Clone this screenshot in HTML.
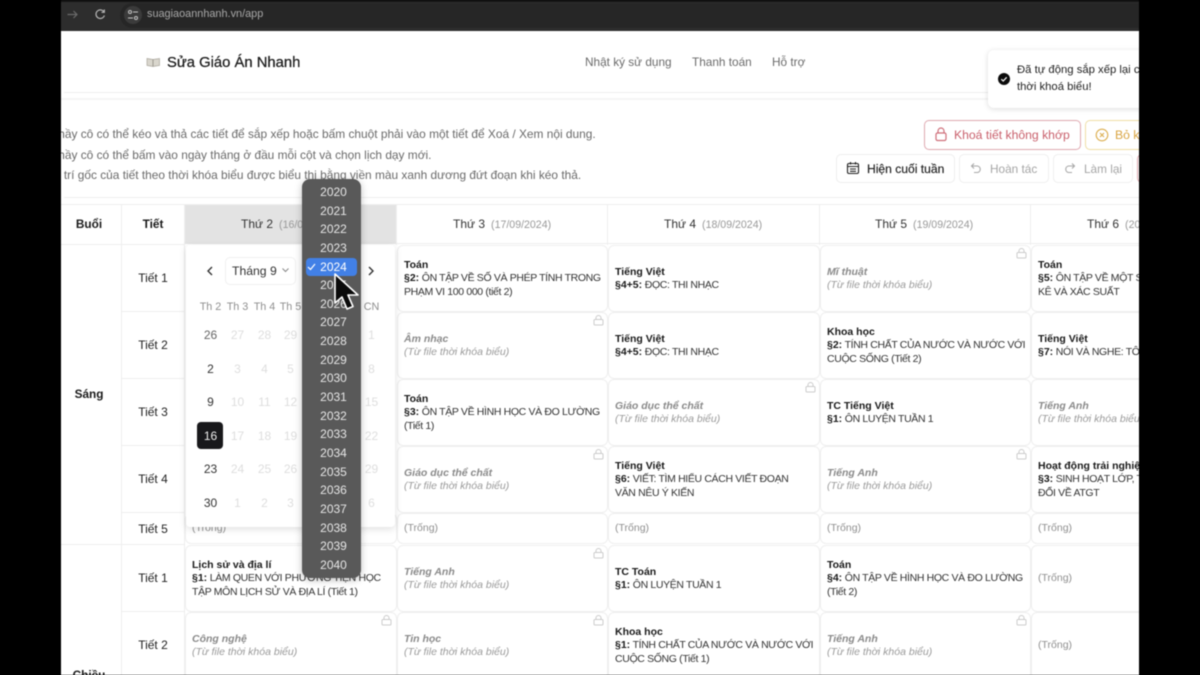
<!DOCTYPE html>
<html lang="vi"><head><meta charset="utf-8"><title>Sửa Giáo Án Nhanh</title>
<style>
html,body{margin:0;padding:0;background:#000;width:1200px;height:675px;overflow:hidden}
#r{position:absolute;left:0;top:0;width:1200px;height:675px;background:#fff;overflow:hidden;font-family:"Liberation Sans",sans-serif;color:#1a1a1a;filter:blur(.4px)}
#r div,#r span.a,#r svg{position:absolute}
.t{white-space:nowrap}
.c{border:1px solid #efefef;border-radius:6px;background:#fff;box-sizing:border-box;display:flex;align-items:center;padding-left:6px;padding-top:1px;font-size:10.5px;line-height:13.4px;white-space:nowrap;color:#333}
.c span{letter-spacing:-.35px}
.c b{color:#1a1a1a;font-weight:700;letter-spacing:0}
.c i{color:#9a9a9a}
.c i b{color:#8a8a8a}
.c span.g{color:#8f8f8f;letter-spacing:0}
.h{font-size:12px;color:#333;white-space:nowrap}
.h small{font-size:10.6px;color:#999;margin-left:6px}
.l{font-size:12px;color:#222;width:62px;left:122px;text-align:center}
.ln{background:#eee}
.lock{width:11px;height:11px;fill:none;stroke:#cbcbcb;stroke-width:1}
.y{left:304px;width:59px;text-align:center;color:#e6e6e6;font-size:12px;line-height:18px;height:18px}
.d{width:27px;text-align:center;font-size:12px;line-height:14px;color:#dedede}
.d.on{color:#333}
.wd{width:27px;text-align:center;font-size:10.8px;line-height:12px;color:#8f8f8f}
.btn{box-sizing:border-box;border:1px solid #efefef;border-radius:5px;height:29px;font-size:11.8px;line-height:28px;white-space:nowrap;background:#fff}
.ins{font-size:11.9px;line-height:14px;color:#6a6a6a}
.nav{top:55px;font-size:11.8px;line-height:14px;color:#6b6b6b}
</style></head><body>
<div id="r">
<!-- browser bar -->
<div style="left:0;top:0;width:1200px;height:31px;background:#2d2d2d"></div>
<div style="left:0;top:0;width:1200px;height:2px;background:#141414"></div>
<div style="left:120px;top:3px;width:1030px;height:25px;border-radius:13px;background:#262626"></div>
<svg style="left:66px;top:8px" width="13" height="13" viewBox="0 0 13 13" fill="none" stroke="#6a6a6a" stroke-width="1.2"><path d="M1.500 6.500H11M7.500 3L11 6.500L7.500 10"/></svg>
<svg style="left:94px;top:8px" width="12" height="12" viewBox="0 0 12 12" fill="none" stroke="#b5b5b5" stroke-width="1.200"><path d="M10 4A4.300 4.300 0 1 0 10.400 7.500M10.300 1.500V4.300H7.500"/></svg>
<div style="left:124px;top:6px;width:18px;height:18px;border-radius:9px;background:#3b3b3b"></div>
<svg style="left:127px;top:9px" width="12" height="12" viewBox="0 0 12 12" fill="none" stroke="#c4c4c4" stroke-width="1"><circle cx="3" cy="3" r="1.500"/><path d="M6 3H11M1 9H6"/><circle cx="9" cy="9" r="1.500"/></svg>
<div class="t" style="left:147px;top:8px;font-size:10.9px;line-height:13px;color:#a9a9a9">suagiaoannhanh.vn/app</div>

<!-- header -->
<svg style="left:146px;top:56px" width="15" height="12" viewBox="0 0 15 12"><path d="M1 2.500L7 3.500L13.500 2.500V9.500L7 10.500L1 9.500Z" fill="#d9d6cd" stroke="#a9a59b" stroke-width=".7"/><path d="M7 3.500V10.500" stroke="#8d8a80" stroke-width=".8"/></svg>
<div class="t" style="left:167px;top:54px;font-size:14.8px;line-height:18px;color:#1c1c1c;-webkit-text-stroke:.25px #1c1c1c">Sửa Giáo Án Nhanh</div>
<div class="t nav" style="left:585px">Nhật ký sử dụng</div>
<div class="t nav" style="left:692px">Thanh toán</div>
<div class="t nav" style="left:772px">Hỗ trợ</div>
<div class="ln" style="left:64px;top:92px;width:1080px;height:1px"></div>
<div style="left:61px;top:98px;width:1080px;height:2px;background:#f5f5f5"></div>

<!-- instructions -->
<div class="t ins" style="left:51px;top:127px">Thầy cô có thể kéo và thả các tiết để sắp xếp hoặc bấm chuột phải vào một tiết để Xoá / Xem nội dung.</div>
<div class="t ins" style="left:51px;top:148px">Thầy cô có thể bấm vào ngày tháng ở đầu mỗi cột và chọn lịch dạy mới.</div>
<div class="t ins" style="left:50px;top:168px">Vị trí gốc của tiết theo thời khóa biểu được biểu thị bằng viền màu xanh dương đứt đoạn khi kéo thả.</div>

<!-- buttons -->
<div class="btn" style="left:924px;top:120px;width:157px;height:30px;border-color:#dfa9b0;color:#c9606c;padding-left:29px;font-size:12.2px">Khoá tiết không khớp</div>
<svg style="left:934px;top:127px" width="14" height="15" viewBox="0 0 14 15" fill="none" stroke="#cf6f7a" stroke-width="1.200"><rect x="2" y="6" width="10" height="7.500" rx="1.500"/><path d="M4 6V4A3 3 0 0 1 10 4V6"/></svg>
<div class="btn" style="left:1085px;top:120px;width:120px;height:30px;border-color:#efdfa6;color:#d9a441;padding-left:29px;font-size:12.2px">Bỏ khoá tất cả</div>
<svg style="left:1095px;top:128px" width="14" height="14" viewBox="0 0 14 14" fill="none" stroke="#dcae4f" stroke-width="1.100"><circle cx="7" cy="7" r="5.800"/><path d="M5 5L9 9M9 5L5 9"/></svg>
<div class="btn" style="left:836px;top:154px;width:119px;color:#1f1f1f;padding-left:30px;border-color:#eee;font-size:12.1px;-webkit-text-stroke:.15px #1f1f1f">Hiện cuối tuần</div>
<svg style="left:846px;top:161px" width="14" height="14" viewBox="0 0 14 14" fill="none" stroke="#222" stroke-width="1.100"><rect x="1.500" y="2.500" width="11" height="10" rx="1.500"/><path d="M1.500 5.500H12.500M4.500 1V3.500M9.500 1V3.500M4 8H10M4 10.300H10"/></svg>
<div class="btn" style="left:959px;top:154px;width:90px;color:#a5a5a5;padding-left:30px">Hoàn tác</div>
<svg style="left:970px;top:162px" width="12" height="12" viewBox="0 0 12 12" fill="none" stroke="#a8a8a8" stroke-width="1.100"><path d="M4 1.500L1.500 4L4 6.500M1.500 4H7.500A3.300 3.300 0 0 1 7.500 10.500H4"/></svg>
<div class="btn" style="left:1053px;top:154px;width:80px;color:#a5a5a5;padding-left:30px">Làm lại</div>
<svg style="left:1064px;top:162px" width="12" height="12" viewBox="0 0 12 12" fill="none" stroke="#a8a8a8" stroke-width="1.100"><path d="M8 1.500L10.500 4L8 6.500M10.500 4H4.500A3.300 3.300 0 0 0 4.500 10.500H8"/></svg>
<div class="btn" style="left:1137px;top:154px;width:40px;border-color:#dfa9b0"></div>

<!-- table frame -->
<div class="ln" style="left:64px;top:197px;width:1080px;height:1px"></div>
<div class="ln" style="left:61px;top:204px;width:1080px;height:1px"></div>
<div class="ln" style="left:61px;top:244px;width:124px;height:1px"></div>
<div class="ln" style="left:121px;top:204px;width:1px;height:471px"></div>
<div class="ln" style="left:184px;top:204px;width:1px;height:471px"></div>
<div class="ln" style="left:122px;top:311px;width:63px;height:1px"></div>
<div class="ln" style="left:122px;top:378px;width:63px;height:1px"></div>
<div class="ln" style="left:122px;top:445px;width:63px;height:1px"></div>
<div class="ln" style="left:122px;top:512px;width:63px;height:1px"></div>
<div class="ln" style="left:61px;top:544px;width:124px;height:1px"></div>
<div class="ln" style="left:122px;top:611px;width:63px;height:1px"></div>
<div class="ln" style="left:396px;top:204px;width:1px;height:41px"></div>
<div class="ln" style="left:607px;top:204px;width:1px;height:41px"></div>
<div class="ln" style="left:819px;top:204px;width:1px;height:41px"></div>
<div class="ln" style="left:1030px;top:204px;width:1px;height:41px"></div>
<div class="ln" style="left:397px;top:243px;width:750px;height:1px"></div>
<div style="left:185px;top:205px;width:211px;height:39px;background:#e3e3e3"></div>

<div class="t" style="left:59px;width:60px;top:217px;text-align:center;font-size:11.8px;line-height:14px;font-weight:700">Buổi</div>
<div class="t" style="left:122px;width:62px;top:217px;text-align:center;font-size:11.8px;line-height:14px;font-weight:700">Tiết</div>
<div class="h" style="left:241px;top:217px;line-height:14px">Thứ 2<small>(16/09/2024)</small></div>
<div class="h" style="left:453px;top:217px;line-height:14px">Thứ 3<small>(17/09/2024)</small></div>
<div class="h" style="left:664px;top:217px;line-height:14px">Thứ 4<small>(18/09/2024)</small></div>
<div class="h" style="left:875px;top:217px;line-height:14px">Thứ 5<small>(19/09/2024)</small></div>
<div class="h" style="left:1087px;top:217px;line-height:14px">Thứ 6<small>(20/09/2024)</small></div>

<div class="t" style="left:59px;width:60px;top:387px;text-align:center;font-size:11.8px;line-height:14px;font-weight:700">Sáng</div>
<div class="t" style="left:59px;width:60px;top:668px;text-align:center;font-size:11.8px;line-height:14px;font-weight:700">Chiều</div>

<div class="l t" style="top:271px;line-height:14px">Tiết 1</div>
<div class="l t" style="top:338px;line-height:14px">Tiết 2</div>
<div class="l t" style="top:405px;line-height:14px">Tiết 3</div>
<div class="l t" style="top:472px;line-height:14px">Tiết 4</div>
<div class="l t" style="top:522px;line-height:14px">Tiết 5</div>
<div class="l t" style="top:571px;line-height:14px">Tiết 1</div>
<div class="l t" style="top:638px;line-height:14px">Tiết 2</div>

<!-- Thu 2 -->
<div class="c" style="left:185px;top:513px;width:212px;height:31px"><span class="g">(Trống)</span></div>
<div class="c" style="left:185px;top:545px;width:212px;height:67px"><span><b>Lịch sử và địa lí</b><br><b>§1:</b> LÀM QUEN VỚI PHƯƠNG TIỆN HỌC<br>TẬP MÔN LỊCH SỬ VÀ ĐỊA LÍ (Tiết 1)</span></div>
<div class="c" style="left:185px;top:612px;width:212px;height:67px"><i><b>Công nghệ</b><br>(Từ file thời khóa biểu)</i></div>
<svg class="lock" style="left:381px;top:615px" viewBox="0 0 11 11"><rect x="1" y="4.500" width="9" height="5.500" rx="1"/><path d="M3 4.500V3A2.500 2.500 0 0 1 8 3V4.500"/></svg>

<!-- Thu 3 -->
<div class="c" style="left:397px;top:245px;width:211px;height:67px"><span><b>Toán</b><br><b>§2:</b> ÔN TẬP VỀ SỐ VÀ PHÉP TÍNH TRONG<br>PHẠM VI 100 000 (tiết 2)</span></div>
<div class="c" style="left:397px;top:312px;width:211px;height:67px"><i><b>Âm nhạc</b><br>(Từ file thời khóa biểu)</i></div>
<svg class="lock" style="left:593px;top:315px" viewBox="0 0 11 11"><rect x="1" y="4.500" width="9" height="5.500" rx="1"/><path d="M3 4.500V3A2.500 2.500 0 0 1 8 3V4.500"/></svg>
<div class="c" style="left:397px;top:379px;width:211px;height:67px"><span><b>Toán</b><br><b>§3:</b> ÔN TẬP VỀ HÌNH HỌC VÀ ĐO LƯỜNG<br>(Tiết 1)</span></div>
<div class="c" style="left:397px;top:446px;width:211px;height:67px"><i><b>Giáo dục thể chất</b><br>(Từ file thời khóa biểu)</i></div>
<svg class="lock" style="left:593px;top:449px" viewBox="0 0 11 11"><rect x="1" y="4.500" width="9" height="5.500" rx="1"/><path d="M3 4.500V3A2.500 2.500 0 0 1 8 3V4.500"/></svg>
<div class="c" style="left:397px;top:513px;width:211px;height:31px"><span class="g">(Trống)</span></div>
<div class="c" style="left:397px;top:545px;width:211px;height:67px"><i><b>Tiếng Anh</b><br>(Từ file thời khóa biểu)</i></div>
<svg class="lock" style="left:593px;top:548px" viewBox="0 0 11 11"><rect x="1" y="4.500" width="9" height="5.500" rx="1"/><path d="M3 4.500V3A2.500 2.500 0 0 1 8 3V4.500"/></svg>
<div class="c" style="left:397px;top:612px;width:211px;height:67px"><i><b>Tin học</b><br>(Từ file thời khóa biểu)</i></div>
<svg class="lock" style="left:593px;top:615px" viewBox="0 0 11 11"><rect x="1" y="4.500" width="9" height="5.500" rx="1"/><path d="M3 4.500V3A2.500 2.500 0 0 1 8 3V4.500"/></svg>

<!-- Thu 4 -->
<div class="c" style="left:608px;top:245px;width:212px;height:67px"><span><b>Tiếng Việt</b><br><b>§4+5:</b> ĐỌC: THI NHẠC</span></div>
<div class="c" style="left:608px;top:312px;width:212px;height:67px"><span><b>Tiếng Việt</b><br><b>§4+5:</b> ĐỌC: THI NHẠC</span></div>
<div class="c" style="left:608px;top:379px;width:212px;height:67px"><i><b>Giáo dục thể chất</b><br>(Từ file thời khóa biểu)</i></div>
<svg class="lock" style="left:805px;top:382px" viewBox="0 0 11 11"><rect x="1" y="4.500" width="9" height="5.500" rx="1"/><path d="M3 4.500V3A2.500 2.500 0 0 1 8 3V4.500"/></svg>
<div class="c" style="left:608px;top:446px;width:212px;height:67px"><span><b>Tiếng Việt</b><br><b>§6:</b> VIẾT: TÌM HIỂU CÁCH VIẾT ĐOẠN<br>VĂN NÊU Ý KIẾN</span></div>
<div class="c" style="left:608px;top:513px;width:212px;height:31px"><span class="g">(Trống)</span></div>
<div class="c" style="left:608px;top:545px;width:212px;height:67px"><span><b>TC Toán</b><br><b>§1:</b> ÔN LUYỆN TUẦN 1</span></div>
<div class="c" style="left:608px;top:612px;width:212px;height:67px"><span><b>Khoa học</b><br><b>§1:</b> TÍNH CHẤT CỦA NƯỚC VÀ NƯỚC VỚI<br>CUỘC SỐNG (Tiết 1)</span></div>

<!-- Thu 5 -->
<div class="c" style="left:820px;top:245px;width:211px;height:67px"><i><b>Mĩ thuật</b><br>(Từ file thời khóa biểu)</i></div>
<svg class="lock" style="left:1016px;top:248px" viewBox="0 0 11 11"><rect x="1" y="4.500" width="9" height="5.500" rx="1"/><path d="M3 4.500V3A2.500 2.500 0 0 1 8 3V4.500"/></svg>
<div class="c" style="left:820px;top:312px;width:211px;height:67px"><span><b>Khoa học</b><br><b>§2:</b> TÍNH CHẤT CỦA NƯỚC VÀ NƯỚC VỚI<br>CUỘC SỐNG (Tiết 2)</span></div>
<div class="c" style="left:820px;top:379px;width:211px;height:67px"><span><b>TC Tiếng Việt</b><br><b>§1:</b> ÔN LUYỆN TUẦN 1</span></div>
<div class="c" style="left:820px;top:446px;width:211px;height:67px"><i><b>Tiếng Anh</b><br>(Từ file thời khóa biểu)</i></div>
<svg class="lock" style="left:1016px;top:449px" viewBox="0 0 11 11"><rect x="1" y="4.500" width="9" height="5.500" rx="1"/><path d="M3 4.500V3A2.500 2.500 0 0 1 8 3V4.500"/></svg>
<div class="c" style="left:820px;top:513px;width:211px;height:31px"><span class="g">(Trống)</span></div>
<div class="c" style="left:820px;top:545px;width:211px;height:67px"><span><b>Toán</b><br><b>§4:</b> ÔN TẬP VỀ HÌNH HỌC VÀ ĐO LƯỜNG<br>(Tiết 2)</span></div>
<div class="c" style="left:820px;top:612px;width:211px;height:67px"><i><b>Tiếng Anh</b><br>(Từ file thời khóa biểu)</i></div>
<svg class="lock" style="left:1016px;top:615px" viewBox="0 0 11 11"><rect x="1" y="4.500" width="9" height="5.500" rx="1"/><path d="M3 4.500V3A2.500 2.500 0 0 1 8 3V4.500"/></svg>

<!-- Thu 6 -->
<div class="c" style="left:1031px;top:245px;width:211px;height:67px"><span><b>Toán</b><br><b>§5:</b> ÔN TẬP VỀ MỘT SỐ YẾU TỐ THỐNG<br>KÊ VÀ XÁC SUẤT</span></div>
<div class="c" style="left:1031px;top:312px;width:211px;height:67px"><span><b>Tiếng Việt</b><br><b>§7:</b> NÓI VÀ NGHE: TÔI ĐỌC SÁCH</span></div>
<div class="c" style="left:1031px;top:379px;width:211px;height:67px"><i><b>Tiếng Anh</b><br>(Từ file thời khóa biểu)</i></div>
<div class="c" style="left:1031px;top:446px;width:211px;height:67px"><span><b>Hoạt động trải nghiệm</b><br><b>§3:</b> SINH HOẠT LỚP, TRAO<br>ĐỔI VỀ ATGT</span></div>
<div class="c" style="left:1031px;top:513px;width:211px;height:31px"><span class="g">(Trống)</span></div>
<div class="c" style="left:1031px;top:545px;width:211px;height:67px"><span class="g">(Trống)</span></div>
<div class="c" style="left:1031px;top:612px;width:211px;height:67px"><span class="g">(Trống)</span></div>

<!-- calendar popup -->
<div style="left:186px;top:245px;width:209px;height:282px;background:#fff;border-radius:4px;box-shadow:0 2px 8px rgba(0,0,0,.13)"></div>
<svg style="left:205px;top:265px" width="10" height="12" viewBox="0 0 10 12" fill="none" stroke="#333" stroke-width="1.400"><path d="M7 2L3 6L7 10"/></svg>
<div style="left:225px;top:257px;width:71px;height:28px;box-sizing:border-box;border:1px solid #f0f0f0;border-radius:5px"></div>
<div class="t" style="left:232px;top:264px;font-size:12.2px;line-height:14px;color:#333">Tháng 9</div>
<svg style="left:281px;top:267px" width="9" height="7" viewBox="0 0 9 7" fill="none" stroke="#888" stroke-width="1"><path d="M1.500 1.500L4.500 4.500L7.500 1.500"/></svg>
<svg style="left:366px;top:265px" width="10" height="12" viewBox="0 0 10 12" fill="none" stroke="#333" stroke-width="1.400"><path d="M3 2L7 6L3 10"/></svg>
<div class="wd" style="left:197px;top:301px">Th 2</div><div class="wd" style="left:224px;top:301px">Th 3</div><div class="wd" style="left:251px;top:301px">Th 4</div><div class="wd" style="left:277px;top:301px">Th 5</div><div class="wd" style="left:358px;top:301px">CN</div>
<div class="d on" style="left:197px;top:328px;color:#666">26</div><div class="d" style="left:224px;top:328px">27</div><div class="d" style="left:251px;top:328px">28</div><div class="d" style="left:277px;top:328px">29</div><div class="d" style="left:358px;top:328px">1</div>
<div class="d on" style="left:197px;top:362px">2</div><div class="d" style="left:224px;top:362px">3</div><div class="d" style="left:251px;top:362px">4</div><div class="d" style="left:277px;top:362px">5</div><div class="d" style="left:358px;top:362px">8</div>
<div class="d on" style="left:197px;top:395px">9</div><div class="d" style="left:224px;top:395px">10</div><div class="d" style="left:251px;top:395px">11</div><div class="d" style="left:277px;top:395px">12</div><div class="d" style="left:358px;top:395px">15</div>
<div style="left:197px;top:422px;width:26px;height:27px;background:#18181b;border-radius:4px"></div>
<div class="d" style="left:197px;top:429px;color:#eee">16</div><div class="d" style="left:224px;top:429px">17</div><div class="d" style="left:251px;top:429px">18</div><div class="d" style="left:277px;top:429px">19</div><div class="d" style="left:358px;top:429px">22</div>
<div class="d on" style="left:197px;top:462px">23</div><div class="d" style="left:224px;top:462px">24</div><div class="d" style="left:251px;top:462px">25</div><div class="d" style="left:277px;top:462px">26</div><div class="d" style="left:358px;top:462px">29</div>
<div class="d on" style="left:197px;top:496px">30</div><div class="d" style="left:224px;top:496px">1</div><div class="d" style="left:251px;top:496px">2</div><div class="d" style="left:277px;top:496px">3</div><div class="d" style="left:358px;top:496px">6</div>

<!-- year dropdown -->
<div style="left:302px;top:179px;width:59px;height:399px;background:#595959;border-radius:8px;box-shadow:0 2px 8px rgba(0,0,0,.25)"></div>
<div style="left:306px;top:258px;width:51px;height:18px;background:#4280e6;border-radius:4px"></div>
<div class="y" style="top:183px">2020</div><div class="y" style="top:202px">2021</div><div class="y" style="top:220px">2022</div><div class="y" style="top:239px">2023</div>
<div class="y" style="top:258px;color:#fff">2024</div>
<svg style="left:307px;top:263px" width="9" height="8" viewBox="0 0 9 8" fill="none" stroke="#fff" stroke-width="1.200"><path d="M1 4L3.500 6.500L8 1"/></svg>
<div class="y" style="top:276px">2025</div><div class="y" style="top:295px">2026</div><div class="y" style="top:313px">2027</div><div class="y" style="top:332px">2028</div><div class="y" style="top:351px">2029</div><div class="y" style="top:369px">2030</div><div class="y" style="top:388px">2031</div><div class="y" style="top:407px">2032</div><div class="y" style="top:425px">2033</div><div class="y" style="top:444px">2034</div><div class="y" style="top:463px">2035</div><div class="y" style="top:481px">2036</div><div class="y" style="top:500px">2037</div><div class="y" style="top:519px">2038</div><div class="y" style="top:537px">2039</div><div class="y" style="top:556px">2040</div>

<!-- cursor -->
<svg style="left:332px;top:272px" width="30" height="42" viewBox="0 0 30 42"><path d="M3 2V31L10 25L15 37L21 34.500L16 23L26 23Z" fill="#0a0a0a" stroke="#fff" stroke-width="1.600" stroke-linejoin="round"/></svg>

<!-- toast -->
<div style="left:988px;top:50px;width:200px;height:58px;background:#fff;border-radius:6px;box-shadow:0 1px 6px rgba(0,0,0,.14)"></div>
<svg style="left:998px;top:73px" width="12" height="12" viewBox="0 0 12 12"><circle cx="6" cy="6" r="6" fill="#0c0c0c"/><path d="M3.300 6.200L5.200 8L8.700 4.300" fill="none" stroke="#fff" stroke-width="1.200"/></svg>
<div class="t" style="left:1017px;top:63px;font-size:11.3px;line-height:14px;color:#222">Đã tự động sắp xếp lại các tiết theo</div>
<div class="t" style="left:1017px;top:80px;font-size:11.3px;line-height:14px;color:#222">thời khoá biểu!</div>

<!-- video letterbox -->
<div style="left:0;top:0;width:61px;height:675px;background:#000"></div>
<div style="left:1139px;top:0;width:61px;height:675px;background:#000"></div>
</div>
</body></html>
